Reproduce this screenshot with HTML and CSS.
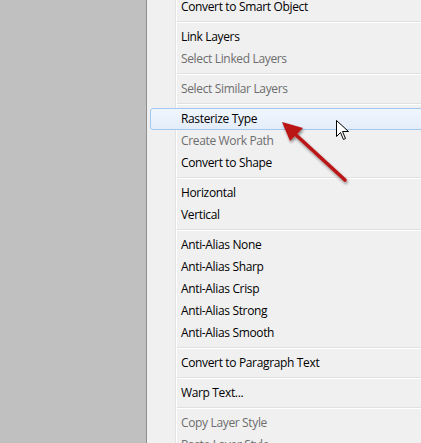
FILE: index.html
```html
<!DOCTYPE html>
<html>
<head>
<meta charset="utf-8">
<link rel="stylesheet" href="styles.css">
</head>
<body>
<div class="page">
  <div class="side"></div>
  <div class="menu">
    <div class="item">Convert to Smart Object</div>
    <div class="sep"></div>
    <div class="item">Link Layers</div>
    <div class="item dis">Select Linked Layers</div>
    <div class="sep"></div>
    <div class="item dis">Select Similar Layers</div>
    <div class="sep"></div>
    <div class="item hl">Rasterize Type</div>
    <div class="item dis">Create Work Path</div>
    <div class="item">Convert to Shape</div>
    <div class="sep"></div>
    <div class="item">Horizontal</div>
    <div class="item">Vertical</div>
    <div class="sep"></div>
    <div class="item">Anti-Alias None</div>
    <div class="item">Anti-Alias Sharp</div>
    <div class="item">Anti-Alias Crisp</div>
    <div class="item">Anti-Alias Strong</div>
    <div class="item">Anti-Alias Smooth</div>
    <div class="sep"></div>
    <div class="item">Convert to Paragraph Text</div>
    <div class="sep"></div>
    <div class="item">Warp Text...</div>
    <div class="sep"></div>
    <div class="item dis">Copy Layer Style</div>
    <div class="item dis">Paste Layer Style</div>
  </div>
  <svg class="overlay" width="421" height="443" viewBox="0 0 421 443">
    <defs>
      <filter id="sh" x="-20%" y="-20%" width="140%" height="140%">
        <feGaussianBlur in="SourceAlpha" stdDeviation="1.5"/>
        <feOffset dx="1" dy="2" result="b"/>
        <feComponentTransfer><feFuncA type="linear" slope="0.45"/></feComponentTransfer>
        <feMerge><feMergeNode/><feMergeNode in="SourceGraphic"/></feMerge>
      </filter>
    </defs>
    <g filter="url(#sh)">
      <line x1="345" y1="180" x2="295" y2="134" stroke="#bb1419" stroke-width="3.5" stroke-linecap="round"/>
      <polygon points="282,122 303,128 290,141" fill="#bb1419"/>
    </g>
    <path d="M336.5 120.5 L336.5 136.5 L340.5 132.5 L343.5 139.5 L345.5 138.5 L342.5 131.5 L348.5 131.5 Z" fill="#fff" stroke="#000" stroke-width="1" stroke-linejoin="miter"/>
  </svg>
</div>
</body>
</html>
```
FILE: styles.css
```css
html, body {
  margin: 0;
  padding: 0;
}
body {
  width: 421px;
  height: 443px;
  overflow: hidden;
  font-family: "Open Sans", "Noto Sans", sans-serif;
  font-size: 12px;
  letter-spacing: -0.35px;
}
.page {
  position: relative;
  display: flex;
  width: 421px;
  height: 443px;
  overflow: hidden;
}
.side {
  width: 146px;
  flex: none;
  background: #c0c0c0;
  border-right: 1px solid #8f8f8f;
}
.menu {
  flex: 1;
  background-color: #f0f0f0;
  background-image: linear-gradient(to right, transparent 28px, #e2e3e3 28px, #e2e3e3 29px, #ffffff 29px, #ffffff 30px, transparent 30px);
  margin-top: -4px;
  color: #000;
}
.item {
  height: 22px;
  line-height: 22px;
  padding-left: 34px;
  white-space: nowrap;
}
.item.dis {
  color: #6d6d6d;
}
.item.hl {
  height: 20px;
  line-height: 20px;
  margin-left: 3px;
  margin-right: -4px;
  padding-left: 30px;
  border: 1px solid #a3c9f1;
  border-radius: 3px;
  background: linear-gradient(to bottom, #f1f6fd, #e3edfa);
}
.sep {
  height: 8px;
  margin-left: 30px;
  position: relative;
}
.sep::before {
  content: "";
  position: absolute;
  left: 0;
  right: 0;
  top: 3px;
  height: 1px;
  background: #e0e0e0;
  border-bottom: 1px solid #ffffff;
}
.overlay {
  position: absolute;
  left: 0;
  top: 0;
  pointer-events: none;
}
```
